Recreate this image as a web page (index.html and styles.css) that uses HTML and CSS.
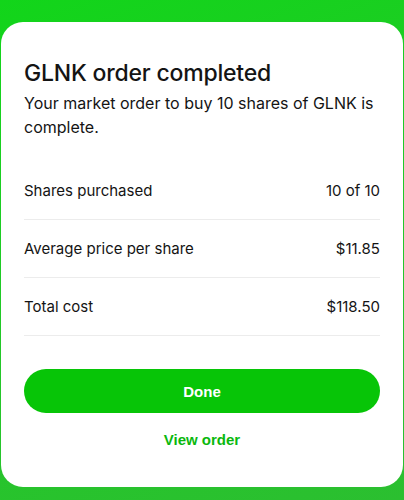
FILE: index.html
```html
<!DOCTYPE html>
<html lang="en">
<head>
    <title>Order completed</title>
    <link rel="stylesheet" href="styles.css">
</head>
<body>
    <div class="sheet">
        <h1>GLNK order completed</h1>
        <p class="summary">Your market order to buy 10 shares of GLNK is complete.</p>
        <ul class="details">
            <li><span>Shares purchased</span><span>10 of 10</span></li>
            <li><span>Average price per share</span><span>$11.85</span></li>
            <li><span>Total cost</span><span>$118.50</span></li>
        </ul>
        <button class="done">Done</button>
        <a href="#" class="view-order">View order</a>
    </div>
</body>
</html>
```

FILE: styles.css
```css
body {
    margin: 0;
    min-height: 500px;
    font-family: 'Inter', 'Noto Sans', sans-serif;
    background: linear-gradient(160deg, #12d51a 0%, #25c62a 60%, #2bbf30 100%);
    overflow: hidden;
}
.sheet {
    margin: 22px 1px 0 1px;
    height: 465px;
    box-sizing: border-box;
    background: #fff;
    border-radius: 22px;
    padding: 37px 23px 0 23px;
    display: flex;
    flex-direction: column;
    color: #141414;
}
h1 {
    margin: 0;
    font-size: 23px;
    font-weight: 500;
    line-height: 28px;
    letter-spacing: -0.2px;
}
.summary {
    margin: 4px 0 0 0;
    font-size: 16px;
    line-height: 24px;
}
.details {
    list-style: none;
    margin: 23px 0 0 0;
    padding: 0;
}
.details li {
    display: flex;
    justify-content: space-between;
    align-items: center;
    height: 57px;
    border-bottom: 1px solid #ececec;
    font-size: 15px;
}
.done {
    margin-top: 33px;
    height: 44px;
    border: none;
    border-radius: 22px;
    background: #07c507;
    color: #fff;
    font-family: 'Liberation Sans', Arial, sans-serif;
    font-size: 15px;
    font-weight: bold;
    cursor: pointer;
}
.view-order {
    margin-top: 18px;
    align-self: center;
    color: #0ab80e;
    font-family: 'Liberation Sans', Arial, sans-serif;
    font-size: 15px;
    font-weight: bold;
    text-decoration: none;
}
```
